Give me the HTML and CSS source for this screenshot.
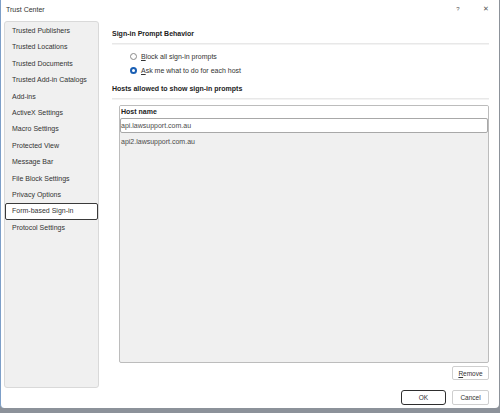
FILE: index.html
```html
<!DOCTYPE html>
<html>
<head>
<meta charset="utf-8">
<link rel="stylesheet" href="styles.css">
</head>
<body>
<div class="window">
  <div class="titlebar">
    <span class="title">Trust Center</span>
    <span class="help">?</span>
    <span class="close">&#x2715;</span>
  </div>
  <div class="main">
    <ul class="nav">
      <li>Trusted Publishers</li>
      <li>Trusted Locations</li>
      <li>Trusted Documents</li>
      <li>Trusted Add-in Catalogs</li>
      <li>Add-ins</li>
      <li>ActiveX Settings</li>
      <li>Macro Settings</li>
      <li>Protected View</li>
      <li>Message Bar</li>
      <li>File Block Settings</li>
      <li>Privacy Options</li>
      <li class="selected">Form-based Sign-in</li>
      <li>Protocol Settings</li>
    </ul>
    <div class="content">
      <div class="heading first">Sign-in Prompt Behavior</div>
      <div class="sep"></div>
      <div class="radios">
        <div class="radio-row"><span class="radio"></span><span><u>B</u>lock all sign-in prompts</span></div>
        <div class="radio-row"><span class="radio on"></span><span><u>A</u>sk me what to do for each host</span></div>
      </div>
      <div class="heading second">Hosts allowed to show sign-in prompts</div>
      <div class="sep"></div>
      <div class="table">
        <div class="thead">Host name</div>
        <div class="row sel">api.lawsupport.com.au</div>
        <div class="row">api2.lawsupport.com.au</div>
      </div>
      <div class="remove-row"><button class="btn"><u>R</u>emove</button></div>
    </div>
  </div>
  <div class="footer">
    <button class="btn ok">OK</button>
    <button class="btn cancel">Cancel</button>
  </div>
</div>
</body>
</html>
```
FILE: styles.css
```css
html, body {
  margin: 0;
  padding: 0;
}
body {
  width: 500px;
  height: 413px;
  background: #8c929a;
  font-family: "Liberation Sans", Arial, sans-serif;
  font-size: 7px;
  color: #2a2a2a;
  overflow: hidden;
}
.window {
  width: 499px;
  height: 408px;
  background: #ffffff;
  border-left: 1px solid #7d9fc8;
  border-radius: 0 0 4px 4px;
  display: flex;
  flex-direction: column;
  box-sizing: border-box;
}
.titlebar {
  height: 21px;
  display: flex;
  align-items: center;
  padding: 0 0 3px 5px;
  box-sizing: border-box;
  flex-shrink: 0;
}
.title {
  flex: 1;
  color: #333;
}
.help {
  width: 10px;
  text-align: center;
  color: #555;
  font-size: 6px;
  margin-right: 18px;
}
.close {
  width: 10px;
  text-align: center;
  color: #555;
  font-size: 7px;
  margin-right: 8px;
}
.main {
  display: flex;
  height: 367px;
  flex-shrink: 0;
}
.nav {
  list-style: none;
  margin: 0 0 0 3px;
  padding: 1px 0 0 0;
  width: 95px;
  box-sizing: border-box;
  background: #f0f0f0;
  border: 1px solid #d9d9d9;
  border-radius: 3px;
}
.nav li {
  height: 16.4px;
  line-height: 16.4px;
  padding-left: 7px;
  color: #333;
  white-space: nowrap;
  box-sizing: border-box;
}
.nav li.selected {
  background: #ffffff;
  border: 1px solid #3a3a3a;
  border-radius: 2px;
  padding-left: 6px;
  line-height: 14.4px;
}
.content {
  flex: 1;
  padding: 7px 10px 0 13px;
  display: flex;
  flex-direction: column;
}
.heading {
  font-weight: bold;
  height: 12px;
  line-height: 12px;
  color: #222;
}
.heading.second {
  margin-top: 6px;
}
.sep {
  height: 1px;
  background: #e8e8e8;
  border-bottom: 1px solid #f3f3f3;
  margin-top: 3px;
}
.radios {
  margin-top: 4px;
  padding-left: 18px;
}
.radio-row {
  height: 14px;
  display: flex;
  align-items: center;
  color: #333;
}
.radio {
  width: 7px;
  height: 7px;
  border-radius: 50%;
  border: 1px solid #8a8a8a;
  box-sizing: border-box;
  background: #fff;
  margin-right: 4px;
}
.radio.on {
  border: 2.2px solid #1a5fb4;
}
.table {
  margin: 5px 0 0 7px;
  height: 258px;
  border: 1px solid #bcbcbc;
  border-radius: 2px;
  background: #f0f0f0;
  box-sizing: border-box;
  overflow: hidden;
}
.thead {
  height: 12px;
  line-height: 12px;
  background: #fff;
  font-weight: bold;
  padding-left: 1px;
  color: #222;
}
.row {
  height: 15px;
  line-height: 15px;
  padding-left: 1px;
  color: #4a4a4a;
  box-sizing: border-box;
}
.row.sel {
  background: #fff;
  border: 1px solid #a8a8a8;
  border-radius: 2px;
  line-height: 13px;
  padding-left: 0;
}
.row + .row {
  margin-top: 1px;
}
.remove-row {
  display: flex;
  justify-content: flex-end;
  margin-top: 3px;
}
.btn {
  font-family: "Liberation Sans", Arial, sans-serif;
  font-size: 6.5px;
  color: #333;
  background: #fff;
  border: 1px solid #cfcfcf;
  border-radius: 2px;
  width: 37px;
  height: 14px;
  padding: 0;
  box-sizing: border-box;
}
.footer {
  display: flex;
  justify-content: flex-end;
  gap: 6px;
  padding: 2px 10px 0 0;
}
.footer .btn {
  height: 15px;
}
.btn.ok {
  width: 45px;
  border: 1.5px solid #2e2e2e;
  border-radius: 3px;
}
```
